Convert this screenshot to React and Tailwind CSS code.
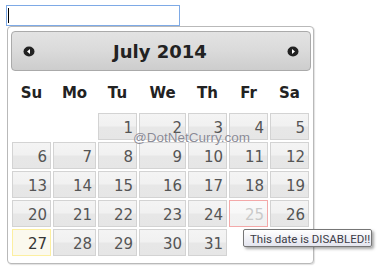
import React from "react";

const COLS = "grid-cols-[41px_45px_41px_49px_41px_41px_41px]";
const DAYS = ["Su", "Mo", "Tu", "We", "Th", "Fr", "Sa"];

// July 2014 starts on a Tuesday
const WEEKS = [
  [null, null, 1, 2, 3, 4, 5],
  [6, 7, 8, 9, 10, 11, 12],
  [13, 14, 15, 16, 17, 18, 19],
  [20, 21, 22, 23, 24, 25, 26],
  [27, 28, 29, 30, 31, null, null],
];

const TODAY = 27;
const DISABLED = 25;

function NavIcon({ dir }) {
  return (
    <svg width="12" height="11" viewBox="0 0 12 11">
      <ellipse cx="6" cy="5.5" rx="5.5" ry="5" fill="#222" />
      {dir === "prev" ? (
        <polygon points="4,5.5 7,3 7,8" fill="#fff" />
      ) : (
        <polygon points="8,5.5 5,3 5,8" fill="#fff" />
      )}
    </svg>
  );
}

function DayCell({ day }) {
  if (day === null) return <div className="p-px" />;

  let look =
    "border-[#d3d3d3] text-[#555] bg-[linear-gradient(to_bottom,#f4f4f4_0%,#f1f1f1_46%,#e7e7e7_54%,#e6e6e6_100%)]";
  if (day === TODAY) {
    look = "border-[#fcefa1] text-[#363636] bg-[#fbf9ee]";
  } else if (day === DISABLED) {
    look =
      "border-[#f3a9a9] text-[#cacaca] bg-[linear-gradient(to_bottom,#fafafa_0%,#f8f8f8_46%,#f2f2f2_54%,#f1f1f1_100%)]";
  }

  return (
    <div className="p-px">
      <div className={`h-[27px] border text-right pr-[3px] pt-[5px] leading-[18px] text-[15px] ${look}`}>
        {day}
      </div>
    </div>
  );
}

export default function App() {
  return (
    <div className="relative w-[388px] h-[276px] bg-white font-['DejaVu_Sans',sans-serif] overflow-hidden">
      {/* text input with caret */}
      <div className="pt-[5px] pl-[6px]">
        <div className="w-[174px] h-[21px] border border-[#7eaae6] bg-white pl-px pt-[2px]">
          <div className="w-px h-[15px] bg-black" />
        </div>
      </div>

      {/* datepicker */}
      <div className="ml-[7px] w-[307px] h-[238px] border border-[#b9b9b9] rounded-[4px] bg-white pl-[3px] pr-[2px] pt-[4px] shadow-[1px_1px_1px_rgba(0,0,0,0.12)]">
        <div className="h-[40px] border border-[#aaaaaa] rounded-[4px] bg-[linear-gradient(to_bottom,#e3e3e3_0%,#dadada_50%,#cdcdcd_100%)] grid grid-cols-[33px_1fr_35px] items-center">
          <div className="flex justify-center pt-px">
            <NavIcon dir="prev" />
          </div>
          <div className="text-center font-bold text-[18px] leading-[22px] text-[#222] pt-[2px]">July 2014</div>
          <div className="flex justify-center pt-px">
            <NavIcon dir="next" />
          </div>
        </div>

        <div className={`grid ${COLS}`}>
          {DAYS.map((d) => (
            <div key={d} className="h-[41px] pt-[13px] leading-[18px] text-center font-bold text-[15px] text-[#222]">
              {d}
            </div>
          ))}
        </div>

        <div className={`grid ${COLS}`}>
          {WEEKS.flat().map((day, i) => (
            <DayCell key={i} day={day} />
          ))}
        </div>
      </div>

      {/* watermark */}
      <div className="absolute left-[133px] top-[130px] font-['Liberation_Sans',sans-serif] text-[13.5px] leading-[16px] text-[#80808c] opacity-90 [text-shadow:0_0_1px_#fff]">
        @DotNetCurry.com
      </div>

      {/* tooltip */}
      <div className="absolute left-[243px] top-[229px] w-[129px] h-[18px] border border-[#767676] rounded-[2px] bg-[linear-gradient(to_bottom,#ffffff,#e4e5ef)] shadow-[2px_2px_3px_rgba(0,0,0,0.35)] pl-[6px] pt-[2px] font-['Roboto',sans-serif] text-[11.5px] leading-[14px] text-[#3c3c46] whitespace-nowrap">
        This date is DISABLED!!
      </div>
    </div>
  );
}
